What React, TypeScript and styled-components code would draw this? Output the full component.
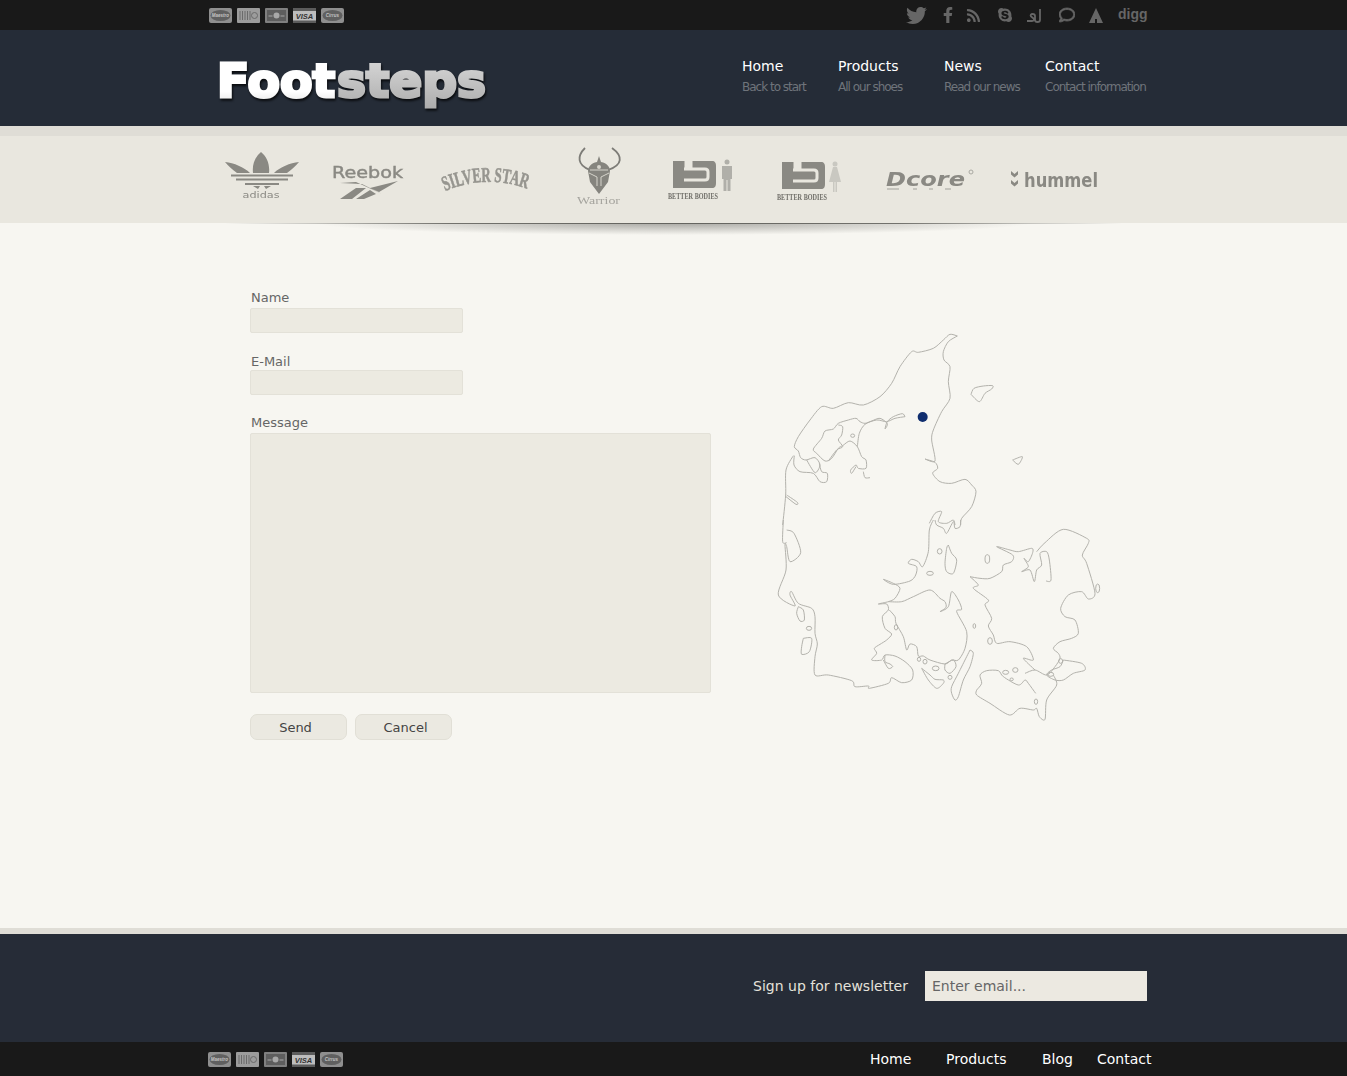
import styled, { createGlobalStyle } from 'styled-components';
import { FaTwitter, FaFacebookF, FaRss, FaSkype, FaRegComment } from 'react-icons/fa';

const GlobalStyle = createGlobalStyle`
  html, body {
    margin: 0;
    background: #f7f6f1;
    font-family: "DejaVu Sans", sans-serif;
  }
`;

const navItems = [
  { title: 'Home', sub: 'Back to start' },
  { title: 'Products', sub: 'All our shoes' },
  { title: 'News', sub: 'Read our news' },
  { title: 'Contact', sub: 'Contact information' },
];

// map outlines, traced in 3x coordinates
const northShapes = [
  '562,33 540,28 520,45 490,70 445,82 425,80 390,125 365,175 330,215 280,240 235,233 190,250 155,245 120,285 85,335 73,365 85,378 92,398 108,405 135,398 150,420 135,443 110,405',
  '562,33 535,50 520,80 522,105 540,125 535,170 540,220 515,260 490,315 485,345 495,408 465,402 495,412 503,430 488,445 510,470 545,475 585,463 605,480 618,500 605,545 575,580 572,600',
  '405,275 397,266 370,275 352,290 345,312 352,296 330,280 305,288 285,295 270,290 258,280 235,285 205,295 190,312 165,318 155,340 130,372 140,385 165,408 185,400 205,370 218,362 240,348 262,365 275,395 288,405 288,430 265,430 258,420 242,435 245,445 258,425',
  '405,275 375,280 350,290 320,285 285,298 268,325 262,365',
  '205,300 218,305 215,330 205,345 218,365 200,375 175,408',
  '70,392 48,435 47,510 38,600',
  '73,392 72,420 90,440 130,445 150,470 170,470 172,445 155,440 148,415',
  '50,510 82,532 78,538 48,515',
  '603,208 612,190 640,183 668,182 665,192 645,205 628,230 603,208',
  '728,405 757,395 745,418 728,405',
  '280,440 285,458 300,458',
  '478,595 495,565 515,560 505,590 530,595 550,585 555,600',
];

const southShapes = [
  '50,30 72,40 92,98 60,125 50,80 45,75 48,150 25,225 75,258 60,225 65,215 85,250 125,265 135,290 135,340 142,372 135,410 135,465 175,465 245,482 255,500 295,498 298,505 355,490 365,473 395,488 425,480 428,450 405,425 375,408 345,405 335,420 305,420 320,400 313,385 330,373 350,360 365,342 345,325 337,290 355,270 350,252 325,252 355,245 375,235 390,205 370,190 340,178 370,193 420,183 437,165 440,140 415,130 425,118 445,125 458,140 475,95 478,30 490,0',
  '40,0 38,65 50,68',
  '572,0 570,20 555,25 550,5 530,40 520,25 500,15 495,0',
  '355,245 395,245 430,230 480,210 510,235 525,245 528,262 510,275 535,260 545,215 565,240 575,268 560,275 590,335 585,385 565,420 545,420 525,432 480,420 460,408 445,408 440,380 420,372 410,390 400,350 378,310 375,290 358,270',
  '600,390 610,400 600,440 580,480 565,530 555,540 545,520 545,500 565,460 590,410 600,390',
  '455,445 480,465 495,478 520,480 520,490 500,505 475,480 455,445',
  '525,432 550,420 558,440 540,460 525,450 525,432',
  '535,75 545,100 560,120 550,160 530,155 525,130 530,85 535,75',
  '85,260 100,270 103,300 90,303 80,280 85,260',
  '100,355 125,355 118,395 95,403 95,380 100,355',
  '345,405 345,425 360,432 368,440 355,445 340,420',
  '600,170 630,175 660,175 695,155 700,135 725,125 728,105 680,80 720,90 745,95 785,85 788,98 775,125 762,115 775,140 755,155 780,150 793,185 800,150 815,135 810,100 830,95 838,120 843,180 828,183',
  '800,95 825,68 880,28 950,55 955,70 937,105 950,130 975,220 955,237 935,215 895,225 872,265 885,290 915,300 925,340 905,355 870,365 850,385 865,400 870,415 855,440 830,465 795,450 765,460',
  '600,170 625,195 610,205 655,240 645,255 665,295 655,318 670,345 680,370 720,365 770,380 790,420 760,415 795,450',
  '620,510 635,490 630,465 650,452 685,452 700,470 745,495 765,480 775,490 797,520',
  '850,465 860,495 830,540 825,598 808,590 800,565 790,570 750,565 718,585 660,550 620,525 620,510',
  '880,420 935,430 945,450 910,460 880,480 855,480 830,465 845,450 870,440 880,420',
];

const southIslands = [
  [117, 325, 8, 6], [497, 445, 10, 7], [465, 425, 6, 7], [447, 418, 5, 6], [540, 472, 6, 6],
  [480, 160, 10, 6], [378, 322, 5, 8], [613, 318, 4, 7], [660, 363, 7, 10], [509, 94, 7, 8],
  [652, 117, 7, 13], [983, 205, 6, 13], [707, 457, 9, 6], [736, 450, 8, 7], [725, 478, 5, 4],
  [798, 545, 5, 8], [872, 423, 6, 7], [842, 463, 9, 6],
];

// catmull-rom through the traced points
function curve(points: string) {
  const p = points.split(' ').map((pair) => pair.split(',').map(Number));
  let d = `M${p[0][0]} ${p[0][1]}`;
  for (let i = 0; i < p.length - 1; i++) {
    const a = p[Math.max(i - 1, 0)];
    const b = p[i];
    const c = p[i + 1];
    const e = p[Math.min(i + 2, p.length - 1)];
    const c1 = [b[0] + (c[0] - a[0]) / 7, b[1] + (c[1] - a[1]) / 7];
    const c2 = [c[0] - (e[0] - b[0]) / 7, c[1] - (e[1] - b[1]) / 7];
    d += `C${c1[0]} ${c1[1]} ${c2[0]} ${c2[1]} ${c[0]} ${c[1]}`;
  }
  return d;
}

function PayCards({ inset }: { inset?: boolean }) {
  return (
    <CardRow $inset={inset}>
      <svg viewBox="0 0 23 15">
        <rect width="23" height="15" rx="2" fill="#8f8f8f" />
        <ellipse cx="11.500" cy="7.500" rx="10" ry="5.500" fill="#606060" />
        <CardText x="11.500" y="8.800">Maestro</CardText>
      </svg>
      <svg viewBox="0 0 23 15">
        <rect width="23" height="15" rx="1" fill="#9c9c9c" />
        <path d="M3 3v9M5.500 3v9M8 3v9M10.500 3v9M13 3v9" stroke="#6a6a6a" />
        <circle cx="17.500" cy="7.500" r="3" fill="none" stroke="#6a6a6a" />
      </svg>
      <svg viewBox="0 0 23 15">
        <rect width="23" height="15" rx="1" fill="#808080" />
        <rect x="2" y="2" width="19" height="11" fill="#5e5e5e" />
        <circle cx="11.500" cy="7.500" r="3" fill="#a8a8a8" />
        <path d="M3.500 8h4M15.500 8h4" stroke="#a8a8a8" />
      </svg>
      <svg viewBox="0 0 23 15">
        <rect width="23" height="15" fill="#5c5c5c" />
        <rect y="3" width="23" height="9.500" fill="#bdbdbd" />
        <text x="11.500" y="10.500" textAnchor="middle" fontSize="7.500" fontWeight="700" fontStyle="italic" fontFamily="Liberation Sans" fill="#333">VISA</text>
      </svg>
      <svg viewBox="0 0 23 15">
        <rect width="23" height="15" rx="2" fill="#8f8f8f" />
        <ellipse cx="11.500" cy="7.500" rx="10" ry="5.500" fill="#606060" />
        <CardText x="11.500" y="8.800">Cirrus</CardText>
      </svg>
    </CardRow>
  );
}

function Adidas() {
  return (
    <Logo $next={33} width="74" viewBox="0 0 74 87">
      <path d="M36 16C30 21 27 28 28 37H44C45 28 42 21 36 16ZM0 26C9 27 19 31 25 37H12C7 33 3 30 0 26ZM74 26C65 27 55 31 49 37H62C67 33 71 30 74 26Z" />
      <path d="M6 39.500H68M11 43.500H63M20 48H54" stroke="#8a8983" strokeWidth="2" />
      <path d="M28 50H35L33 53ZM46 50H39L41 53Z" />
      <LogoText x="36" y="62" textAnchor="middle" fontSize="9" textLength="37" lengthAdjust="spacingAndGlyphs">adidas</LogoText>
    </Logo>
  );
}

function Reebok() {
  return (
    <Logo $next={37} width="74" viewBox="0 0 74 87">
      <LogoText x="0" y="42" fontSize="15" stroke="#8a8983" strokeWidth="0.400" textLength="71" lengthAdjust="spacingAndGlyphs">Reebok</LogoText>
      <path d="M8 47L24 46L50 58L30 48ZM66 45L38 52L47 56ZM24 52L34 52L20 63H8ZM38 54L44 58L32 63H24Z" />
    </Logo>
  );
}

function SilverStar() {
  return (
    <Logo $next={46} width="88" viewBox="0 0 88 87">
      <defs><path id="arch" d="M2 55Q44 37 88 54" /></defs>
      <SerifText fontSize="21" fontWeight="700" fill="#96958f" stroke="#96958f" strokeWidth="0.600">
        <textPath href="#arch" textLength="84" lengthAdjust="spacingAndGlyphs">SILVER STAR</textPath>
      </SerifText>
    </Logo>
  );
}

function Warrior() {
  return (
    <Logo $next={43} width="48" viewBox="1 0 48 87">
      <path d="M9 12C1 20 1 29 14 34M36 12C47 20 47 29 32 34" fill="none" stroke="#7d7c77" strokeWidth="1.800" />
      <path d="M23 20L25 26C31 27 34 31 34 35L32 46L23 58L14 46L12 35C12 31 15 27 21 26Z" fill="#85847e" />
      <path d="M13 37L21 41L21 50M33 37L25 41L25 50M14 34H32" fill="none" stroke="#d6d4cc" strokeWidth="1" />
      <circle cx="23" cy="31" r="2" fill="#d6d4cc" />
      <SerifText x="1" y="67.500" fontSize="9.500" fill="#a5a49e" textLength="43" lengthAdjust="spacingAndGlyphs">Warrior</SerifText>
    </Logo>
  );
}

function BetterBodies({ female, lift, next }: { female?: boolean; lift: number; next: number }) {
  return (
    <Logo $next={next} width="65" viewBox={`0 ${lift} 65 87`}>
      <path d="M5 25H44C47 25 48 27 48 30V47C48 50 47 52 44 52H5Z" />
      <path d="M16 33H37C39 33 40 34 40 36V41C40 43 39 44 37 44H16" fill="none" stroke="#e9e7df" strokeWidth="3" />
      <rect x="16.500" y="24" width="8" height="8" fill="#e9e7df" />
      {female ? (
        <g fill="#c9c8c1">
          <circle cx="58" cy="27" r="2.500" />
          <path d="M56 30H60L64 45H52ZM56 45H57.500V55H56ZM58.500 45H60V55H58.500Z" />
        </g>
      ) : (
        <g fill="#b0afa9">
          <circle cx="59" cy="26" r="2.500" />
          <path d="M54 30H64V43H62.500V55H59.500V44H58.500V55H55.500V43H54Z" />
        </g>
      )}
      <SerifText x="0" y="63" fontSize="7.500" fontWeight="700" textLength="50" lengthAdjust="spacingAndGlyphs" fill="#6f6e68">BETTER BODIES</SerifText>
    </Logo>
  );
}

function Dcore() {
  return (
    <Logo $next={36} width="89" viewBox="0 0 89 87">
      <LogoText x="1" y="50" fontSize="19" fontWeight="700" fontStyle="italic" textLength="79" lengthAdjust="spacingAndGlyphs">Dcore</LogoText>
      <path d="M2 53H14M28 53H32M44 53H48M60 53H66" stroke="#c5c4bd" strokeWidth="2" />
      <circle cx="86" cy="36" r="2" fill="none" stroke="#a9a8a2" />
    </Logo>
  );
}

function Hummel() {
  return (
    <Logo $next={0} width="88" viewBox="0 0 88 87">
      <path d="M1 35L4.500 38L8 35V38.500L4.500 41.500L1 38.500ZM1 44L4.500 47L8 44V47.500L4.500 50.500L1 47.500Z" />
      <LogoText x="14" y="51" fontSize="20" fontWeight="700" textLength="74" lengthAdjust="spacingAndGlyphs">hummel</LogoText>
    </Logo>
  );
}

function FootstepsLogo() {
  return (
    <LogoMark width="280" height="62" viewBox="0 0 280 62">
      <defs>
        <linearGradient id="footWhite" x1="0" y1="0" x2="0" y2="1">
          <stop offset="0" stopColor="#ffffff" />
          <stop offset="0.7" stopColor="#ffffff" />
          <stop offset="1" stopColor="#dedede" />
        </linearGradient>
        <linearGradient id="stepsGrey" x1="0" y1="0" x2="0" y2="1">
          <stop offset="0" stopColor="#dcdcdc" />
          <stop offset="1" stopColor="#adadad" />
        </linearGradient>
      </defs>
      <HeavyText x="2" y="45" fill="url(#footWhite)" stroke="url(#footWhite)" textLength="118" lengthAdjust="spacingAndGlyphs">Foot</HeavyText>
      <HeavyText x="122" y="45" fill="url(#stepsGrey)" stroke="url(#stepsGrey)" textLength="149" lengthAdjust="spacingAndGlyphs">steps</HeavyText>
    </LogoMark>
  );
}

function DenmarkMap() {
  return (
    <MapDrawing width="340" height="405" viewBox="0 0 1020 1215">
      <g fill="none" stroke="#b3b2ac" strokeWidth="3" strokeLinejoin="round">
        {northShapes.map((shape) => <path key={shape} d={curve(shape)} />)}
        <ellipse cx="248" cy="332" rx="6" ry="5" />
        <g transform="translate(0 585)">
          {southShapes.map((shape) => <path key={shape} d={curve(shape)} />)}
          {southIslands.map(([cx, cy, rx, ry]) => <ellipse key={`${cx}-${cy}`} cx={cx} cy={cy} rx={rx} ry={ry} />)}
        </g>
      </g>
      <circle cx="458" cy="276" r="15" fill="#0f2d6e" />
    </MapDrawing>
  );
}

function App() {
  return (
    <>
      <GlobalStyle />
      <TopBar>
        <Inner>
          <PayCards inset />
          <Social>
            <FaTwitter size={21} />
            <FaFacebookF size={16} />
            <FaRss size={15} />
            <FaSkype size={16} />
            <svg width="18" height="15" viewBox="0 0 18 15" fill="none" stroke="#666" strokeWidth="1.800">
              <path d="M1 13H6C8 13 8.500 11.500 7.500 10.500L5 8.500C4 7 5 6 6.500 6C8 6 9 7 9 8V12C9 13.500 10 14 11.500 14C13 14 14 13.500 14 12V1" />
            </svg>
            <FaRegComment size={16} stroke="#666" strokeWidth={24} />
            <svg width="14" height="15" viewBox="0 0 14 15" fill="#666"><path d="M7 0L14 15H8V11H6V15H0Z" /></svg>
            <DiggMark>digg</DiggMark>
          </Social>
        </Inner>
      </TopBar>

      <Header>
        <HeaderInner>
          <FootstepsLogo />
          <Nav>
            {navItems.map((item) => (
              <NavItem key={item.title}>
                <NavTitle>{item.title}</NavTitle>
                <NavSub>{item.sub}</NavSub>
              </NavItem>
            ))}
          </Nav>
        </HeaderInner>
      </Header>

      <Strip />
      <Brands>
        <BrandRow>
          <Adidas />
          <Reebok />
          <SilverStar />
          <Warrior />
          <BetterBodies lift={0} next={44} />
          <BetterBodies female lift={-1} next={43} />
          <Dcore />
          <Hummel />
        </BrandRow>
      </Brands>

      <Content>
        <ContentInner>
          <ContactForm>
            <Label>Name</Label>
            <ShortInput />
            <Label $top={19} $bottom={-2}>E-Mail</Label>
            <ShortInput />
            <Label $top={18}>Message</Label>
            <MessageBox />
            <Buttons>
              <SendButton type="button">Send</SendButton>
              <CancelButton type="button">Cancel</CancelButton>
            </Buttons>
          </ContactForm>
          <DenmarkMap />
        </ContentInner>
      </Content>

      <Strip $thin />
      <Newsletter>
        <NewsletterInner>
          <SignUp>Sign up for newsletter</SignUp>
          <EmailInput placeholder="Enter email..." />
        </NewsletterInner>
      </Newsletter>
      <BottomBar>
        <Inner>
          <PayCards />
          <FooterNav>
            <FooterLink $width={76}>Home</FooterLink>
            <FooterLink $width={96}>Products</FooterLink>
            <FooterLink $width={55}>Blog</FooterLink>
            <FooterLink $width={54}>Contact</FooterLink>
          </FooterNav>
        </Inner>
      </BottomBar>
    </>
  );
}

const Inner = styled.div`
  display: flex;
  justify-content: space-between;
  align-items: center;
  width: 939px;
  margin-left: 208px;
  height: 100%;
`;

const TopBar = styled.div`
  height: 30px;
  background: #191919;
`;

const CardRow = styled.div<{ $inset?: boolean }>`
  display: flex;
  gap: 5px;
  padding-left: ${({ $inset }) => ($inset ? '1px' : '0')};

  svg {
    display: block;
    width: 23px;
    height: 15px;
  }
`;

const CardText = styled.text`
  font-family: "Liberation Sans", sans-serif;
  font-size: 4.5px;
  font-style: italic;
  font-weight: 700;
  text-anchor: middle;
  fill: #c4c4c4;
`;

const Social = styled.div`
  display: flex;
  align-items: center;
  color: #666;

  svg {
    display: block;
    flex: none;
  }
  svg:nth-child(1) { margin-right: 13px; }
  svg:nth-child(2) { margin-right: 10px; }
  svg:nth-child(3) { margin-right: 16px; }
  svg:nth-child(4) { margin-right: 13px; }
  svg:nth-child(5) { margin-right: 15px; }
  svg:nth-child(6) { margin-right: 14px; }
  svg:nth-child(7) { margin-right: 15px; }
`;

const DiggMark = styled.span`
  font-family: "Liberation Sans", sans-serif;
  font-size: 14px;
  font-weight: 700;
  line-height: 16px;
  width: 29px;
  margin-top: -3px;
  color: #666;
`;

const Header = styled.header`
  height: 96px;
  background: #252c37;
`;

const HeaderInner = styled(Inner)`
  align-items: flex-start;
`;

const LogoMark = styled.svg`
  display: block;
  margin: 22px 0 0 7px;
  filter: drop-shadow(1px 2px 1px rgba(0, 0, 0, 0.75));
`;

const HeavyText = styled.text`
  font-family: "DejaVu Sans", sans-serif;
  font-weight: 700;
  font-size: 47px;
  stroke-width: 3px;
`;

const Nav = styled.nav`
  display: grid;
  grid-template-columns: 96px 106px 101px 102px;
  padding-top: 27px;
`;

const NavItem = styled.div`
  display: flex;
  flex-direction: column;
`;

const NavTitle = styled.span`
  font-size: 14px;
  line-height: 18px;
  color: #fff;
`;

const NavSub = styled.span`
  margin-top: 5px;
  font-size: 12px;
  line-height: 15px;
  letter-spacing: -1px;
  color: #6f747b;
  white-space: nowrap;
`;

const Strip = styled.div<{ $thin?: boolean }>`
  height: ${({ $thin }) => ($thin ? '6px' : '10px')};
  background: #dfddd6;
`;

const Brands = styled.div`
  position: relative;
  height: 87px;
  background: #e9e7df;

  &::after {
    content: '';
    position: absolute;
    left: 225px;
    right: 225px;
    top: 87px;
    height: 12px;
    background:
      linear-gradient(90deg, transparent, rgba(70, 70, 65, 0.7) 25%, rgba(70, 70, 65, 0.7) 75%, transparent) top / 100% 1px no-repeat,
      radial-gradient(ellipse 40% 100% at 50% 0, rgba(60, 60, 55, 0.42), transparent) top / 100% 100% no-repeat;
  }
`;

const BrandRow = styled.div`
  display: flex;
  margin-left: 225px;
`;

const Logo = styled.svg<{ $next: number }>`
  display: block;
  flex: none;
  height: 87px;
  fill: #8a8983;
  margin-right: ${({ $next }) => $next}px;
  overflow: visible;
  filter: blur(0.3px);
`;

const LogoText = styled.text`
  font-family: "DejaVu Sans", sans-serif;
  fill: #8a8983;
`;

const SerifText = styled.text`
  font-family: "Liberation Serif", serif;
`;

const Content = styled.main`
  height: 705px;
  background: #f7f6f1;
`;

const ContentInner = styled.div`
  display: flex;
  align-items: flex-start;
  margin-left: 250px;
`;

const ContactForm = styled.form`
  display: flex;
  flex-direction: column;
  align-items: flex-start;
  width: 520px;
  padding-top: 65px;
`;

const Label = styled.label<{ $top?: number; $bottom?: number }>`
  margin: ${({ $top }) => $top ?? 0}px 0 ${({ $bottom }) => $bottom ?? 0}px 1px;
  font-size: 13px;
  line-height: 20px;
  color: #666;
`;

const fieldStyle = `
  box-sizing: border-box;
  display: block;
  background: #eceae1;
  border: 1px solid #e3e1d8;
  border-radius: 2px;
  outline: none;
`;

const ShortInput = styled.input`
  ${fieldStyle}
  width: 213px;
  height: 25px;
`;

const MessageBox = styled.textarea`
  ${fieldStyle}
  width: 461px;
  height: 260px;
  resize: none;
`;

const Buttons = styled.div`
  display: flex;
  gap: 8px;
  margin-top: 21px;
`;

const FormButton = styled.button`
  box-sizing: border-box;
  width: 97px;
  height: 26px;
  background: #ebe9e1;
  border: 1px solid #e1dfd6;
  border-radius: 7px;
  font-family: "DejaVu Sans", sans-serif;
  font-size: 13px;
  color: #444;
`;

const SendButton = styled(FormButton)`
  padding: 0 6px 0 0;
`;

const CancelButton = styled(FormButton)`
  padding: 0 0 0 4px;
`;

const MapDrawing = styled.svg`
  display: block;
  margin-top: 102px;
`;

const Newsletter = styled.section`
  height: 108px;
  background: #262c37;
`;

const NewsletterInner = styled.div`
  display: flex;
  justify-content: flex-end;
  align-items: center;
  width: 939px;
  margin-left: 208px;
  padding-top: 37px;
`;

const SignUp = styled.span`
  margin-right: 17px;
  font-size: 14px;
  color: #e4e2db;
`;

const EmailInput = styled.input`
  box-sizing: border-box;
  width: 222px;
  height: 30px;
  padding: 0 7px;
  background: #ece9e1;
  border: none;
  outline: none;
  font-family: "DejaVu Sans", sans-serif;
  font-size: 14px;

  &::placeholder {
    color: #666;
    opacity: 1;
  }
`;

const BottomBar = styled.footer`
  height: 34px;
  background: #191919;
`;

const FooterNav = styled.nav`
  display: flex;
  margin-right: -4px;
`;

const FooterLink = styled.span<{ $width: number }>`
  width: ${({ $width }) => $width}px;
  font-size: 14px;
  color: #fff;
  white-space: nowrap;
`;

export default App;
